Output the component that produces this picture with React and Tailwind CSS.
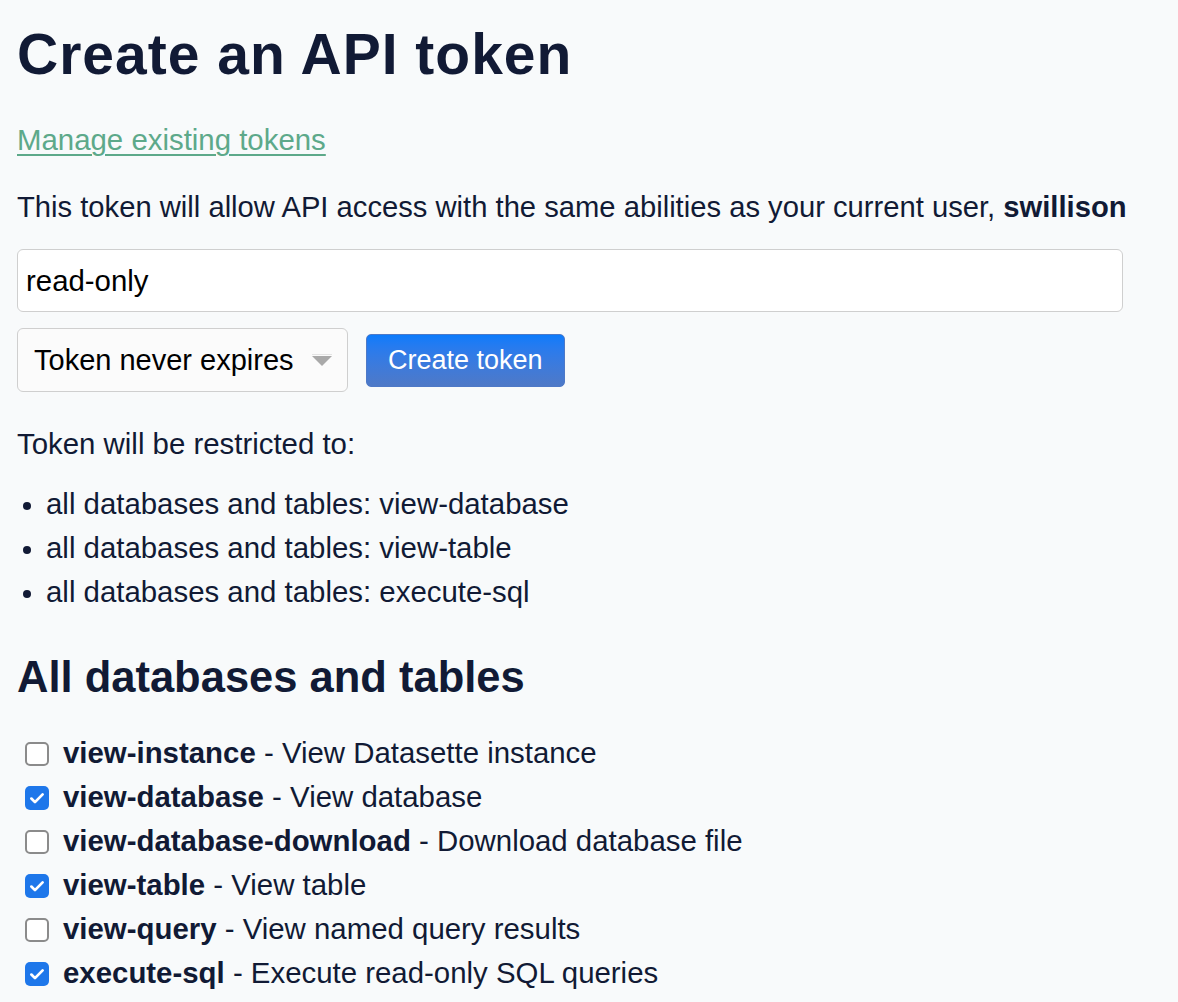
import React from 'react'

const restrictions = ['view-database', 'view-table', 'execute-sql']

const permissions = [
  { name: 'view-instance', desc: 'View Datasette instance', checked: false },
  { name: 'view-database', desc: 'View database', checked: true },
  { name: 'view-database-download', desc: 'Download database file', checked: false },
  { name: 'view-table', desc: 'View table', checked: true },
  { name: 'view-query', desc: 'View named query results', checked: false },
  { name: 'execute-sql', desc: 'Execute read-only SQL queries', checked: true },
]

function Checkbox({ checked }) {
  if (checked) {
    return (
      <span className="w-6 h-6 rounded-[5px] bg-[#1e77ea] flex items-center justify-center shrink-0">
        <svg width="18" height="18" viewBox="0 0 16 16" fill="none">
          <path d="M3 8.5l3.2 3.2L13 4.8" stroke="white" strokeWidth="2.4" strokeLinecap="round" strokeLinejoin="round" />
        </svg>
      </span>
    )
  }
  return <span className="w-6 h-6 rounded-[5px] border-2 border-[#8b8b8b] bg-white shrink-0" />
}

function App() {
  return (
    <div
      className="min-h-screen bg-[#f8fafb] text-[#111a35] pl-[17px] pt-[22px] pb-4"
      style={{ fontFamily: '"Liberation Sans", Arial, sans-serif' }}
    >
      <h1 className="text-[57px] leading-[64px] font-bold tracking-[1px]">Create an API token</h1>

      <p className="mt-[32px] text-[29.4px] leading-[44px]">
        <a href="#" className="text-[#5da98a] underline decoration-[2px] underline-offset-[4px]">
          Manage existing tokens
        </a>
      </p>

      <p className="mt-[23px] text-[29.2px] leading-[44px]">
        This token will allow API access with the same abilities as your current user, <strong>swillison</strong>
      </p>

      <div className="mt-[20px] w-[1106px] h-[63px] bg-white border border-[#cfcfcf] rounded-[6px] flex items-center pl-[8px] text-[29.4px] leading-[44px] text-black">
        read-only
      </div>

      <div className="mt-[16px] flex items-center gap-[18px]">
        <div className="w-[331px] h-[64px] bg-[#fbfbfb] border border-[#cfcfcf] rounded-[6px] flex items-center justify-between pl-[16px] pr-[14px] text-[29px] leading-[44px] text-black">
          <span>Token never expires</span>
          <svg width="22" height="14" viewBox="0 0 22 14">
            <path d="M1 1.5h20" stroke="#e4e4e4" strokeWidth="1" />
            <path d="M1 3h20L11 13z" fill="#a9a9a9" />
          </svg>
        </div>
        <button className="h-[53px] px-[21px] rounded-[5px] border border-[#4e79c7] bg-gradient-to-b from-[#0a7bfb] to-[#4e79c7] text-white text-[27px] leading-[40px]">
          Create token
        </button>
      </div>

      <p className="mt-[30px] text-[29.4px] leading-[44px]">Token will be restricted to:</p>

      <ul className="mt-[16px] text-[29.4px] leading-[44px]">
        {restrictions.map((r) => (
          <li key={r} className="flex items-center">
            <span className="w-[8px] h-[8px] rounded-full bg-[#111a35] ml-[6px] mr-[15px] mt-[3px]" />
            <span>all databases and tables: {r}</span>
          </li>
        ))}
      </ul>

      <h2 className="mt-[37px] text-[43.5px] leading-[52px] font-bold">All databases and tables</h2>

      <div className="mt-[28px]">
        {permissions.map((p) => (
          <label key={p.name} className="flex items-center h-[44px] text-[29.4px] leading-[44px]">
            <span className="ml-[8px] mr-[14px] mt-[1px] flex">
              <Checkbox checked={p.checked} />
            </span>
            <span>
              <strong>{p.name}</strong> - {p.desc}
            </span>
          </label>
        ))}
      </div>
    </div>
  )
}

export default App
